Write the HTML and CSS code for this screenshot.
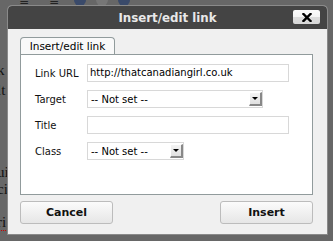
FILE: index.html
```html
<!DOCTYPE html>
<html>
<head>
<meta charset="utf-8">
<link rel="stylesheet" href="styles.css">
</head>
<body>
<div class="page">
  <div class="toolbar">
    <span class="tb-icon">≡</span><span class="tb-icon">≡</span><span class="tb-icon circ"></span><span class="tb-icon circ dim"></span><span class="tb-icon circ"></span>
  </div>
  <div class="behind">
    <p class="b1">k</p>
    <p class="b2">lt</p>
    <p class="b3">ui</p>
    <p class="b4">ci</p>
    <p class="b5"><span class="spell">ri</span></p>
  </div>
</div>
<div class="dialog">
  <div class="titlebar">
    <span class="title">Insert/edit link</span>
    <span class="close"><svg width="10" height="9" viewBox="0 0 10 9"><path d="M1.5 1 L8.5 8 M8.5 1 L1.5 8" stroke="#000" stroke-width="2.4" stroke-linecap="square"/></svg></span>
  </div>
  <div class="dbody">
    <div class="tabs"><span class="tab">Insert/edit link</span></div>
    <div class="panel">
      <div class="row"><label>Link URL</label><div class="input wide">http://thatcanadiangirl.co.uk</div></div>
      <div class="row"><label>Target</label><div class="select sel-target"><span>-- Not set --</span><span class="arrow"></span></div></div>
      <div class="row"><label>Title</label><div class="input wide"></div></div>
      <div class="row"><label>Class</label><div class="select sel-class"><span>-- Not set --</span><span class="arrow"></span></div></div>
    </div>
    <div class="buttons">
      <span class="btn">Cancel</span>
      <span class="btn">Insert</span>
    </div>
  </div>
</div>
</body>
</html>
```
FILE: styles.css
```css
html, body { margin: 0; padding: 0; }
body {
  width: 333px;
  height: 241px;
  overflow: hidden;
  background: #676767;
  position: relative;
  font-family: "DejaVu Sans", Verdana, sans-serif;
}
.page { height: 241px; }
.toolbar {
  display: flex;
  gap: 10px;
  padding-left: 14px;
  height: 6px;
  overflow: hidden;
}
.tb-icon {
  font-size: 12px;
  line-height: 8px;
  color: #222;
  margin-top: -3px;
  width: 20px;
  text-align: center;
}
.tb-icon.circ {
  width: 12px; height: 12px; border-radius: 50%;
  background: #3a4a6a; margin-top: -6px;
}
.tb-icon.dim { background: #777; }
.behind {
  font-family: "Liberation Serif", serif;
  font-size: 15px;
  color: #111;
  margin-left: -3px;
}
.behind p { margin: 0; height: 14px; line-height: 14px; }
.b1 { margin-top: 57px !important; }
.b2 { margin-top: 6px !important; }
.b3 { margin-top: 68px !important; }
.b4 { margin-top: 3px !important; }
.b5 { margin-top: 19px !important; }
.spell { border-bottom: 1px dotted #c00; }

.dialog {
  position: absolute;
  left: 8px;
  top: 6px;
  width: 319px;
  height: 228px;
  background: #f0f0f0;
  border-radius: 4px 4px 0 0;
  box-shadow: 0 0 0 1px #8a8a8a;
  overflow: hidden;
  display: flex;
  flex-direction: column;
}
.titlebar {
  height: 23px;
  background: #444;
  display: flex;
  align-items: center;
  justify-content: center;
  position: relative;
}
.title {
  color: #e8e8e8;
  font-weight: bold;
  font-size: 11.8px;
}
.close {
  position: absolute;
  right: 7px;
  top: 4px;
  width: 27px;
  height: 14px;
  background: linear-gradient(#fbfbfb 0%, #f4f4f4 50%, #dcdcdc 50%, #d8d8d8 100%);
  border-radius: 2px;
  display: flex;
  align-items: center;
  justify-content: center;
}
.dbody {
  padding: 8px 14px 0 12px;
  display: flex;
  flex-direction: column;
}
.tabs { display: flex; height: 17px; }
.tab {
  width: 93px;
  height: 16px;
  border: 1px solid #919b9c;
  border-bottom: none;
  border-radius: 4px 4px 0 0;
  background: #f9f9f9;
  font-size: 10.5px;
  line-height: 16px;
  text-align: center;
  color: #000;
}
.panel {
  width: 291px;
  background: #fff;
  border: 1px solid #919b9c;
  padding-top: 9px;
  display: flex;
  flex-direction: column;
  gap: 8px;
  height: 130px;
}
.row {
  display: flex;
  align-items: center;
  height: 18px;
  font-size: 10px;
}
.row label {
  width: 52px;
  padding-left: 14px;
  color: #111;
}
.input {
  height: 16px;
  border: 1px solid #d8d8d8;
  line-height: 16px;
  padding-left: 2px;
  color: #000;
}
.input.wide { width: 198px; }
.select {
  height: 16px;
  border: 1px solid #d8d8d8;
  display: flex;
  align-items: center;
  justify-content: space-between;
  padding-left: 3px;
  color: #000;
}
.sel-target { width: 171px; }
.sel-class { width: 92px; }
.arrow {
  width: 13px;
  height: 14px;
  border-top: 1px solid #fff;
  border-left: 1px solid #fff;
  border-right: 2px solid #888;
  border-bottom: 2px solid #888;
  background: linear-gradient(#f4f4f4, #e0e0e0);
  box-sizing: border-box;
  position: relative;
}
.arrow::after {
  content: "";
  position: absolute;
  left: 2px;
  top: 4px;
  border-left: 3px solid transparent;
  border-right: 3px solid transparent;
  border-top: 3px solid #000;
}
.buttons {
  display: flex;
  justify-content: space-between;
  margin-top: 6px;
  width: 293px;
}
.btn {
  width: 91px;
  height: 21px;
  border: 1px solid #bcbcbc;
  border-radius: 3px;
  background: linear-gradient(#fbfbfb, #e6e6e6);
  font-weight: bold;
  font-size: 11px;
  line-height: 21px;
  text-align: center;
  color: #111;
}
```
